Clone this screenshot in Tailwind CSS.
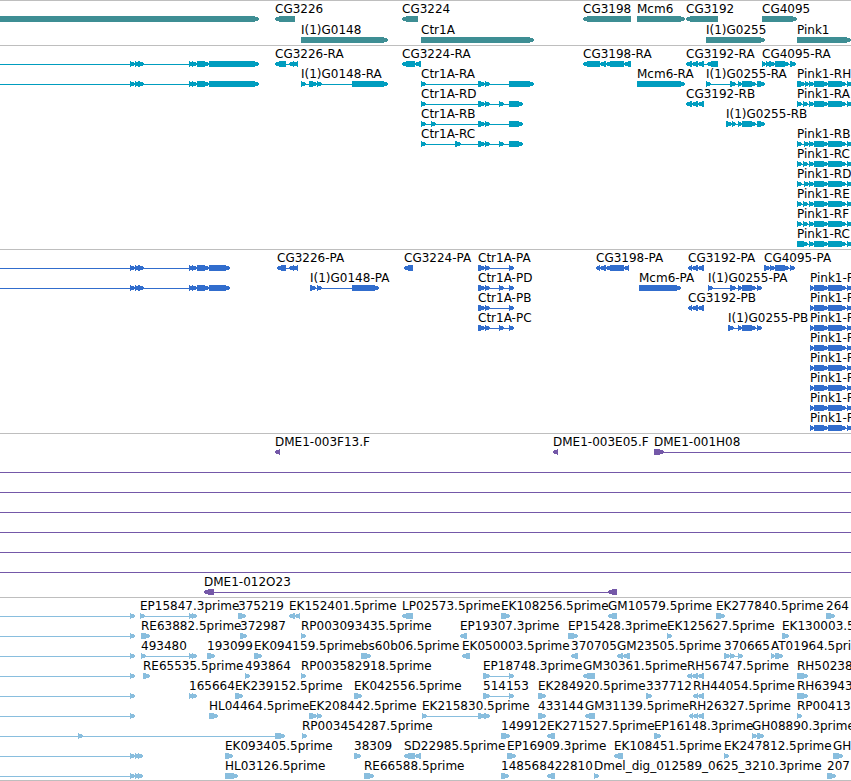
<!DOCTYPE html>
<html lang="en">
<head>
  <meta charset="utf-8">
  <meta name="viewport" content="width=device-width, initial-scale=1">
  <title>Genome browser</title>
  <script src="https://cdn.jsdelivr.net/npm/@tailwindcss/browser@4"></script>
</head>
<body class="bg-white text-black text-[12px] leading-[14px] font-['DejaVu_Sans',sans-serif]">
  <main class="flex flex-col overflow-hidden border-b border-[#bebebe]">
    <section id="genes" aria-label="Genes" class="flex flex-col border-t border-[#bebebe] pt-px pb-px text-[#3e8e94]"></section>
    <section id="transcripts" aria-label="Transcripts" class="flex flex-col border-t border-[#bebebe] pt-px pb-0.5 text-[#009dbf]"></section>
    <section id="proteins" aria-label="Proteins" class="flex flex-col border-t border-[#bebebe] pt-px pb-0.5 text-[#316dcd]"></section>
    <section id="clones" aria-label="Clones" class="flex flex-col border-t border-[#bebebe] pt-px pb-0.5 text-[#7458a8]"></section>
    <section id="ests" aria-label="ESTs" class="flex flex-col border-t border-[#bebebe] pt-px pb-px text-[#89bede]"></section>
  </main>

  <script>
    // One line per feature: row | strand | blocks | label
    // A block is "start-end"; a lone number only stretches the connecting line.
    const tracks = {
      genes: `
0|>|0-259|
0|<|275-295|CG3226
0|<|402-418|CG3224
0|<|583-631|CG3198
0|>|637-685|Mcm6
0|<|686-718|CG3192
0|>|762-797|CG4095
1|>|301-388|I(1)G0148
1|>|421-534|Ctr1A
1|>|706-765|I(1)G0255
1|>|797-851|Pink1`,
      transcripts: `
0|>|0 130-135 135-139 138-144 189-193 192-197 197-209 209-259|
0|<|275-286 289-294 293-298|CG3226-RA
0|<|402-415 415-421|CG3224-RA
0|<|583-600 600-606 606-624 624-631|CG3198-RA
0|<|686-692 692-698 698-704 707-718|CG3192-RA
0|>|762-766 766-770 769-775 775-789 790-796|CG4095-RA
1|>|0 130-135 135-139 138-144 189-193 192-197 197-209 209-259|
1|>|301-306 309-317 317-322 352-388|I(1)G0148-RA
1|>|421-426 478-485 485-490 509-534|Ctr1A-RA
1|>|637-685|Mcm6-RA
1|>|706-711 730-736 738-742 742-756 757-765|I(1)G0255-RA
1|>|797-805 805-809 809-814 814-828 828-846 847-852|Pink1-RH
2|>|421-426 478-485 485-490 499-504 509-523|Ctr1A-RD
2|<|686-692 692-698 698-704|CG3192-RB
2|>|797-802 803-808 809-814 814-828 828-846 847-852|Pink1-RA
3|>|421-426 431-436 478-485 485-490 509-523|Ctr1A-RB
3|>|726-732 732-736 738-742 742-756 757-765|I(1)G0255-RB
4|>|421-426 455-461 478-485 485-490 499-504 509-523|Ctr1A-RC
4|>|797-802 804-809 809-814 814-828 828-846 847-852|Pink1-RB
5|>|797-802 803-808 809-814 814-828 828-846 847-852|Pink1-RC
6|>|797-802 804-809 809-814 814-828 828-846 847-852|Pink1-RD
7|>|797-802 803-808 809-814 814-828 828-846 847-852|Pink1-RE
8|>|797-802 803-808 809-814 814-828 828-846 847-852|Pink1-RF
9|>|797-808 809-814 814-828 828-846 847-852|Pink1-RC`,
      proteins: `
0|>|0 130-135 135-139 138-144 189-193 192-197 197-209 209-230|
0|<|277-286 289-294 293-298|CG3226-PA
0|<|404-413|CG3224-PA
0|>|478-485 485-490 509-514|Ctr1A-PA
0|<|596-600 600-606 606-624 624-629|CG3198-PA
0|<|688-692 692-698 698-704|CG3192-PA
0|>|764-770 770-775 775-789 790-795|CG4095-PA
1|>|0 130-135 135-139 138-144 189-193 192-197 197-209 209-230|
1|>|310-316 317-322 352-379|I(1)G0148-PA
1|>|478-485 485-490 499-504 509-514|Ctr1A-PD
1|>|639-681|Mcm6-PA
1|>|708-713 730-736 738-742 742-756 757-762|I(1)G0255-PA
1|>|810-814 814-828 828-846 847-852|Pink1-PH
2|>|478-485 485-490 509-514|Ctr1A-PB
2|<|688-692 692-698 698-704|CG3192-PB
2|>|810-814 814-828 828-846 847-852|Pink1-PA
3|>|478-485 485-490 499-504 509-514|Ctr1A-PC
3|>|728-734 738-742 742-756 757-762|I(1)G0255-PB
3|>|810-814 814-828 828-846 847-852|Pink1-PB
4|>|810-814 814-828 828-846 847-852|Pink1-PC
5|>|810-814 814-828 828-846 847-852|Pink1-PD
6|>|810-814 814-828 828-846 847-852|Pink1-PE
7|>|810-814 814-828 828-846 847-852|Pink1-PF
8|>|810-814 814-828 828-846 847-852|Pink1-PG`,
      clones: `
0|<|275-280|DME1-003F13.F
0|<|553-558|DME1-003E05.F
0|>|654-664 4000|DME1-001H08
1|>|0 4000|
2|>|0 4000|
3|>|0 4000|
4|>|0 4000|
5|>|0 4000|
6|>|0 4000|
7|<|204-214 608-617|DME1-012O23`,
      ests: `
0|>|0 130-135|
0|>|140-145 189-194 192-197|EP15847.3prime
0|>|238-246|375219
0|<|289-295 295-300|EK152401.5prime
0|<|402-413|LP02573.5prime
0|>|501-510|EK108256.5prime
0|<|608-617|GM10579.5prime
0|>|716-725|EK277840.5prime
0|>|826-835|264
1|>|0 130-135|
1|>|141-150|RE63882.5prime
1|>|240-247|372987
1|>|301-306|RP003093435.5prime
1|<|460-467|EP19307.3prime
1|>|568-578|EP15428.3prime
1|>|667-672|EK125627.5prime
1|>|782-789|EK130003.5prime
2|>|0 130-135|
2|>|141-146 189-194 192-197|493480
2|>|207-215|193099
2|>|254-262|EK094159.5prime
2|>|361-371|bs60b06.5prime
2|<|462-470|EK050003.5prime
2|<|571-578|370705
2|<|617-623 623-630|GM23505.5prime
2|>|724-730 730-735 738-743|370665
2|>|771-775 775-783|AT01964.5prime
3|>|0 130-135|
3|>|143-150|RE65535.5prime
3|>|245-250|493864
3|>|301-306|RP003582918.5prime
3|>|483-490 509-514|EP18748.3prime
3|<|583-595|GM30361.5prime
3|<|687-692 692-698 698-704|RH56747.5prime
3|>|797-808|RH50238
4|>|0 130-135|
4|>|189-194 192-197|165664
4|>|235-243|EK239152.5prime
4|>|354-362|EK042556.5prime
4|>|483-490 509-514|514153
4|>|538-546|EK284920.5prime
4|>|646-652|337712
4|<|693-698 698-704|RH44054.5prime
4|>|797-808|RH63943
5|>|0 130-135|
5|>|209-218|HL04464.5prime
5|>|309-317 317-322|EK208442.5prime
5|>|422-427 478-485 484-490|EK215830.5prime
5|>|538-546|433144
5|<|585-595|GM31139.5prime
5|<|689-693 693-698 698-704|RH26327.5prime
5|>|797-802|RP00413
6|>|0 78-83 275-285|
6|>|302-307|RP003454287.5prime
6|>|501-510|149912
6|<|547-555|EK271527.5prime
6|>|654-661|EP16148.3prime
6|>|752-757 757-764|GH08890.3prime
7|>|0 130-135 135-139 138-143|
7|>|225-233|EK093405.5prime
7|>|354-361|38309
7|<|404-415 415-421|SD22985.5prime
7|>|507-516|EP16909.3prime
7|<|614-623|EK108451.5prime
7|>|724-729|EK247812.5prime
7|>|833-843|GH
8|>|0 130-135 135-139 138-143|
8|>|225-238|HL03126.5prime
8|>|364-374|RE66588.5prime
8|>|501-509|148568
8|<|547-555|422810
8|>|594-599|Dmel_dig_012589_0625_3210.3prime
8|>|827-836|207`,
    };

    // block with a blunt point on the strand side
    function arrow(a, b, strand) {
      const tip = Math.min(5, b - a);
      return strand === '>'
        ? `M${a} 14H${b - tip}L${b} 16V18L${b - tip} 20H${a}Z`
        : `M${a} 16L${a + tip} 14H${b}V20H${a + tip}L${a} 18Z`;
    }

    for (const [id, text] of Object.entries(tracks)) {
      const rows = [];
      for (const line of text.trim().split('\n')) {
        const [row, strand, blocks, label] = line.split('|');
        const r = rows[row] ??= { path: '', labels: '' };
        const parts = blocks.split(' ').map(p => p.split('-').map(Number));
        const start = parts[0][0];
        r.path += `M${start} 17H${parts.at(-1).at(-1)}V18H${start}Z`;
        for (const [a, b] of parts) {
          if (b !== undefined) r.path += arrow(a, b, strand);
        }
        if (label) {
          r.labels += `<span class="absolute top-0 whitespace-nowrap text-black" style="left:${start}px">${label}</span>`;
        }
      }
      const height = id === 'genes' ? 'h-[21px]' : 'h-5';
      document.getElementById(id).innerHTML = rows.map(r => `
        <div class="relative w-full overflow-hidden ${height}">
          <svg class="block h-full w-full" fill="currentColor" shape-rendering="crispEdges" aria-hidden="true"><path d="${r.path}"/></svg>
          ${r.labels}
        </div>`).join('');
    }
  </script>
</body>
</html>
